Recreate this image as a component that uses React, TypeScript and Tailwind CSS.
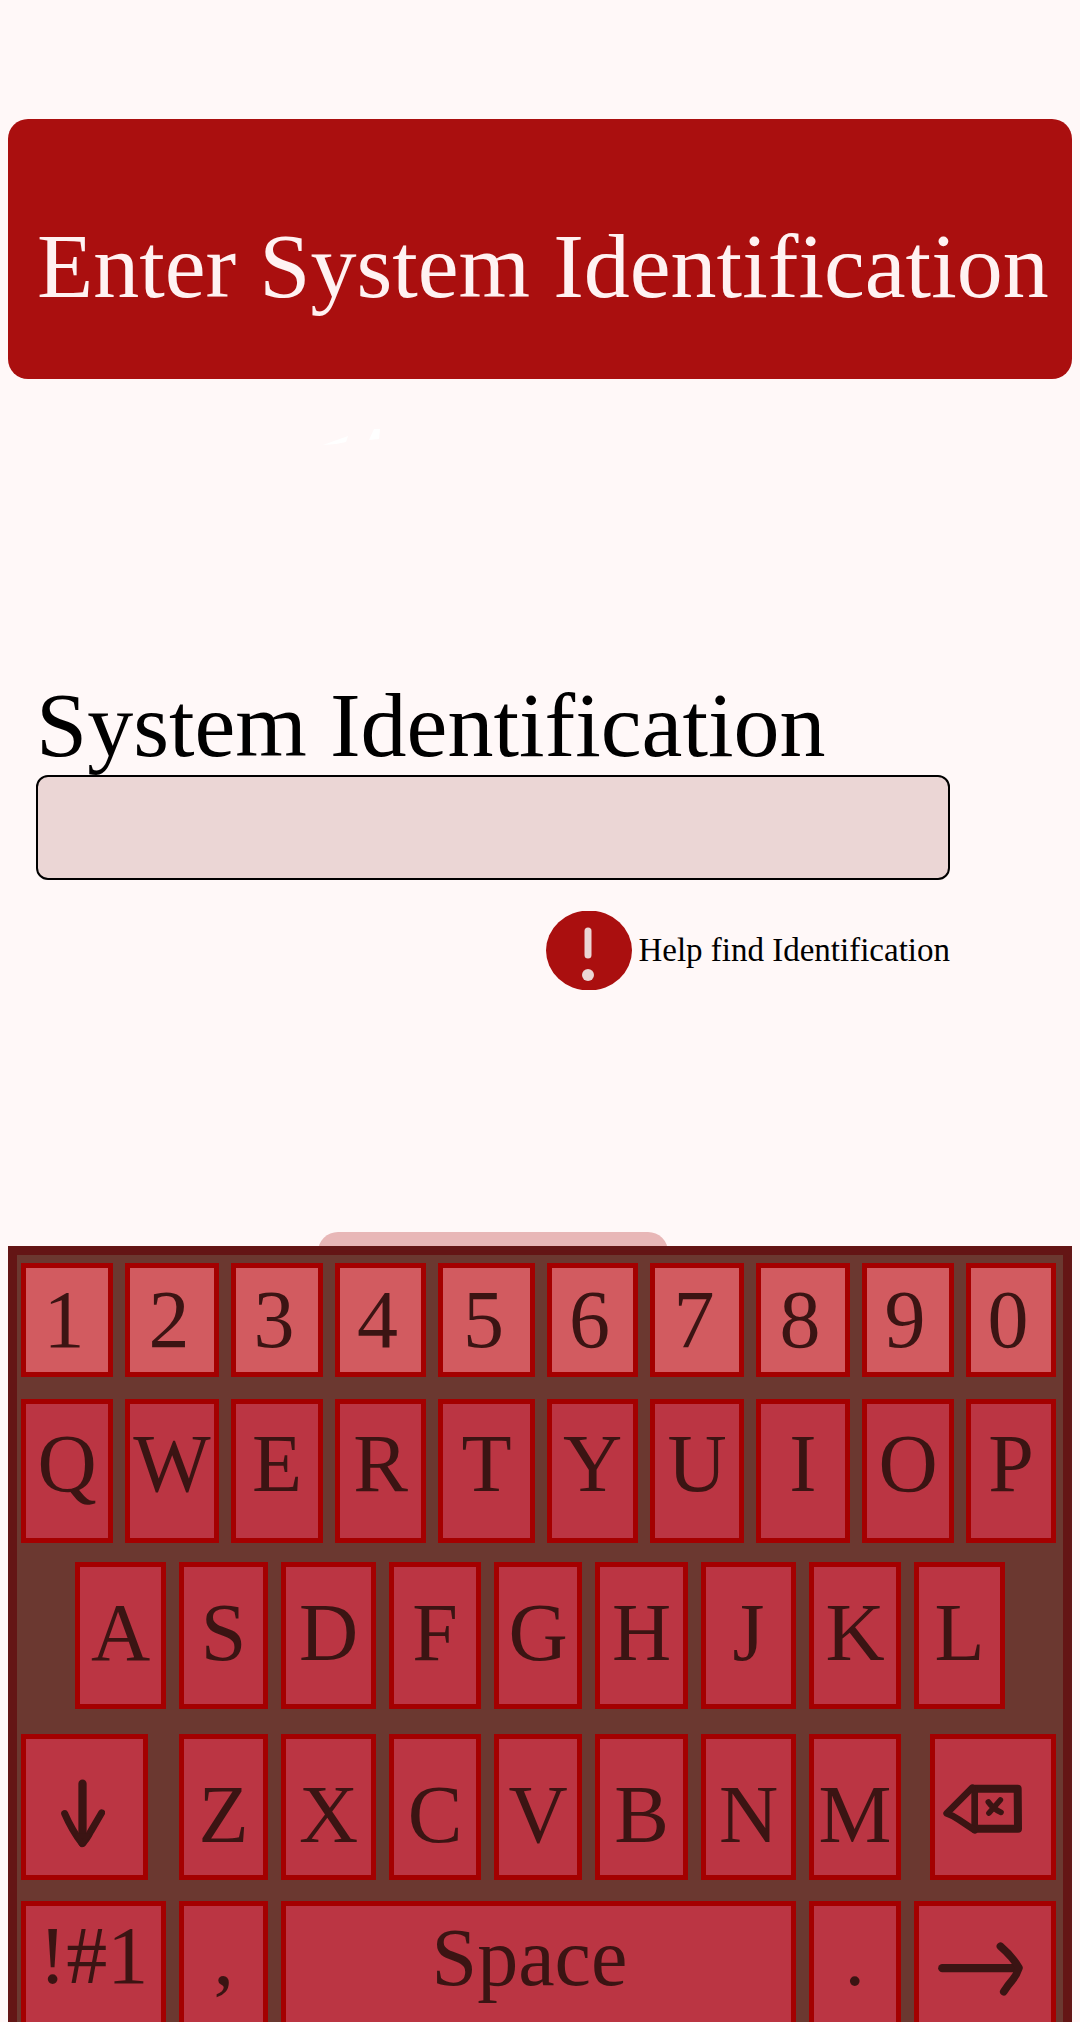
import type { ReactNode } from "react";

const TOP_COLUMNS =
  "grid grid-cols-[92fr_94fr_92fr_91fr_97fr_91fr_94fr_94fr_92fr_90fr] gap-x-3";

function Key({
  children,
  className = "",
  label,
}: {
  children: ReactNode;
  className?: string;
  label?: string;
}) {
  return (
    <button
      type="button"
      aria-label={label}
      className={`flex min-w-0 items-start justify-center border-[5px] border-[#a40000] text-[82px] leading-none text-[#3b1413] ${className}`}
    >
      {children}
    </button>
  );
}

function ShiftIcon() {
  return (
    <svg
      width="44"
      height="69"
      viewBox="185 178 133 206"
      fill="none"
      stroke="currentColor"
      strokeLinecap="round"
      strokeLinejoin="round"
      aria-hidden="true"
    >
      <path d="M250 191 L250 370" strokeWidth="25" />
      <path d="M196 281 Q218 332 249 372 Q262 362 275 335 L308 279" strokeWidth="21" />
      <path d="M234 348 L250 372 L266 348 Z" fill="currentColor" strokeWidth="14" />
    </svg>
  );
}

function BackspaceIcon() {
  return (
    <svg
      width="79"
      height="50"
      viewBox="489 193 237 150"
      fill="none"
      stroke="currentColor"
      strokeLinecap="round"
      strokeLinejoin="round"
      aria-hidden="true"
    >
      <path d="M582 207 H713 L714 327 H586" strokeWidth="24" />
      <path d="M584 207 V330" strokeWidth="20" />
      <path d="M577 204 L500 281 Q520 288 537 300 L584 332" strokeWidth="20" />
      <path d="M625 247 Q640 268 663 278 M661 241 L627 280" strokeWidth="17" />
    </svg>
  );
}

function EnterIcon() {
  return (
    <svg
      width="85"
      height="54"
      viewBox="475 666 256 161"
      fill="none"
      stroke="currentColor"
      strokeLinecap="round"
      strokeLinejoin="round"
      aria-hidden="true"
    >
      <path d="M488 744 L715 744" strokeWidth="25" />
      <path d="M663 678 Q700 710 719 743 Q712 764 699 780 Q684 797 673 815" strokeWidth="23" />
    </svg>
  );
}

function HelpIcon() {
  return (
    <svg width="86" height="79" viewBox="0 0 86 79" aria-hidden="true">
      <ellipse cx="43" cy="39.5" rx="43" ry="40" fill="#aa0f0f" />
      <path d="M42 20 L42 44" stroke="#ebd6d5" strokeWidth="7" strokeLinecap="round" />
      <ellipse cx="42" cy="64" rx="6" ry="6" fill="#ebd6d5" />
    </svg>
  );
}

function Keyboard() {
  return (
    <section
      aria-label="Keyboard"
      className="relative mx-2 flex grow flex-col border-[9px] border-b-0 border-[#641515] bg-[#6b3830] pt-2 pr-[7px] pl-1"
    >
      <div className={`${TOP_COLUMNS} h-[114px]`}>
        {[..."1234567890"].map((k) => (
          <Key key={k} className="bg-[#d25b60] pt-[11px] pr-1.5">
            {k}
          </Key>
        ))}
      </div>
      <div className={`${TOP_COLUMNS} mt-[22px] h-36`}>
        {[..."QWERTYUIOP"].map((k) => (
          <Key key={k} className="bg-[#bb3543] pt-[19px]">
            {k}
          </Key>
        ))}
      </div>
      <div className="mt-[19px] grid h-[147px] grid-cols-[91fr_89fr_95fr_92fr_88fr_93fr_95fr_92fr_91fr] gap-x-[13px] pr-[51px] pl-[54px]">
        {[..."ASDFGHJKL"].map((k) => (
          <Key key={k} className="bg-[#bb3543] pt-[25px]">
            {k}
          </Key>
        ))}
      </div>
      <div className="mt-[25px] grid h-[146px] grid-cols-[145fr_89fr_95fr_92fr_88fr_93fr_95fr_92fr_142fr] gap-x-[13px]">
        <Key label="Shift" className="mr-[18px] bg-[#bb3543] pt-10 pr-1">
          <ShiftIcon />
        </Key>
        {[..."ZXCVBNM"].map((k) => (
          <Key key={k} className="bg-[#bb3543] pt-[35px]">
            {k}
          </Key>
        ))}
        <Key label="Backspace" className="ml-4 bg-[#bb3543] pt-[45px] pr-[22px]">
          <BackspaceIcon />
        </Key>
      </div>
      <div className="mt-[21px] grid min-h-[121px] grow grid-cols-[145fr_89fr_514fr_92fr_142fr] gap-x-[13px]">
        <Key label="Symbols" className="border-b-0 bg-[#bb3543] pt-[9px]">
          !#1
        </Key>
        <Key label="Comma" className="border-b-0 bg-[#bb3543] pt-[11px]">
          ,
        </Key>
        <Key className="border-b-0 bg-[#bb3543] pt-[11px] pr-[18px]">Space</Key>
        <Key label="Period" className="border-b-0 bg-[#bb3543] pt-[11px]">
          .
        </Key>
        <Key label="Enter" className="border-b-0 bg-[#bb3543] pt-9 pr-2">
          <EnterIcon />
        </Key>
      </div>
    </section>
  );
}

export default function App() {
  return (
    <main className="flex min-h-screen flex-col overflow-x-hidden bg-[#fff8f8] font-['Liberation_Serif',serif]">
      <header className="mx-2 mt-[119px] rounded-[20px] bg-[#aa0f0f] pt-[101px] pb-[67px] pl-[29px]">
        <h1 className="text-[92px] leading-none whitespace-nowrap text-[#fff2f2]">
          Enter System Identification
        </h1>
      </header>

      <svg
        width="57"
        height="16"
        viewBox="0 0 57 16"
        fill="#ffffff"
        className="mt-[50px] ml-[323px]"
        aria-hidden="true"
      >
        <path d="M0 16 L25 7 L23 13 Q12 16 0 16 Z" />
        <path d="M51 0 H57 L56 10 L46 11 Z" />
      </svg>

      <form className="mt-[234px] mr-[130px] ml-9 flex flex-col">
        <label
          htmlFor="system-id"
          className="text-[92px] leading-none whitespace-nowrap text-black"
        >
          System Identification
        </label>
        <input
          id="system-id"
          type="text"
          className="mt-1 h-[105px] w-full rounded-[12px] border-2 border-black bg-[#ebd6d5] px-4 text-[60px] outline-none"
        />
        <a
          href="#help"
          className="mt-[31px] flex items-center gap-1.5 self-end text-[33px] leading-none text-black"
        >
          <HelpIcon />
          Help find Identification
        </a>
      </form>

      <div className="mt-[242px] -mb-[26px] ml-[318px] h-10 w-[350px] rounded-[20px] bg-[#e8b7b7]" />
      <Keyboard />
    </main>
  );
}
